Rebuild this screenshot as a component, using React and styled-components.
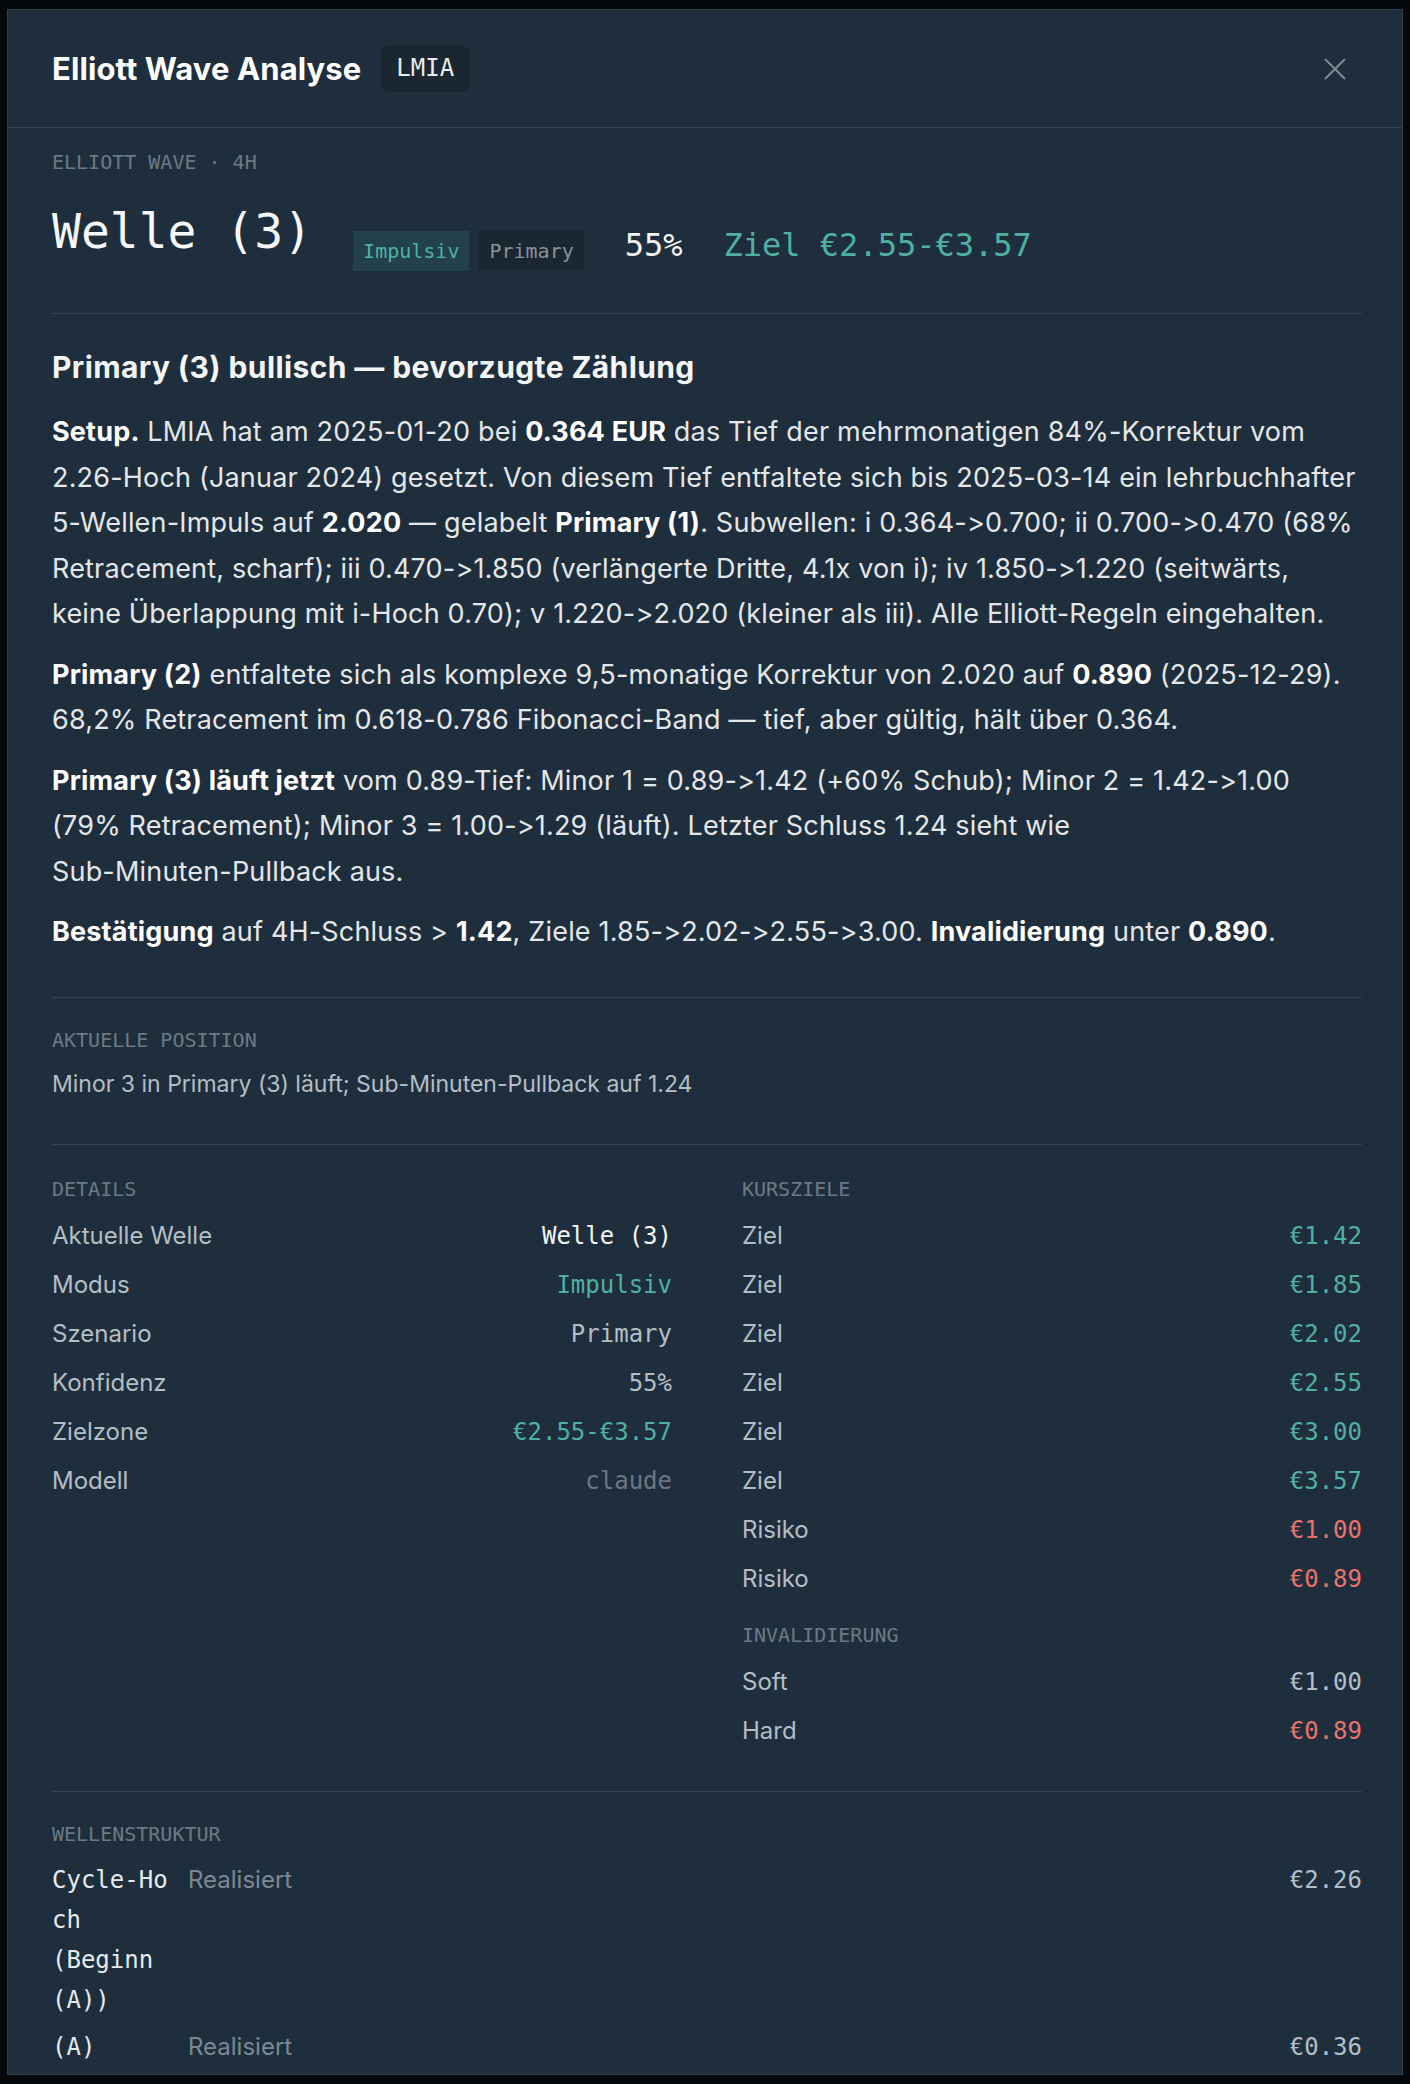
import styled, { createGlobalStyle } from 'styled-components'

const MONO = `"DejaVu Sans Mono", "Liberation Mono", monospace`

const GlobalStyle = createGlobalStyle`
  html, body {
    margin: 0;
    padding: 0;
    background: #05090c;
  }
  body {
    font-family: Inter, "Noto Sans", sans-serif;
    font-feature-settings: "calt" 0, "liga" 0;
    -webkit-font-smoothing: antialiased;
  }
  * { box-sizing: border-box; }
`

const tones = {
    white: '#f3f5f7',
    light: '#b4bec6',
    teal: '#4fb0a3',
    red: '#e8736b',
    muted: '#6b7883',
}

const Backdrop = styled.div`
    height: 2084px;
    padding: 9px 7px 0;
    overflow: hidden;
`

const Modal = styled.div`
    width: 1396px;
    height: 2066px;
    background: #1f2e3c;
    border: 1px solid #2e3e4b;
    overflow: hidden;
`

const Header = styled.header`
    display: flex;
    align-items: center;
    padding: 35px 47px 35px 44px;
    border-bottom: 1px solid #33434f;
`

const Title = styled.h1`
    margin: 0;
    font-size: 31px;
    line-height: 40px;
    font-weight: 700;
    letter-spacing: 0.1px;
    color: #ffffff;
`

const Ticker = styled.span`
    margin-left: 20px;
    padding: 9px 15px;
    font: 24px/29px ${MONO};
    color: #e9edf0;
    background: #1a2630;
    border-radius: 8px;
`

const CloseButton = styled.button`
    margin-left: auto;
    width: 40px;
    height: 40px;
    display: flex;
    align-items: center;
    justify-content: center;
    padding: 0;
    border: 0;
    background: none;
    color: #7e8a94;
    cursor: pointer;
`

const Body = styled.div`
    padding: 0 40px 0 44px;
`

const Section = styled.section`
    padding: ${p => p.$top ?? 28}px 0 ${p => p.$bottom ?? 42}px;
    border-bottom: ${p => (p.$last ? 'none' : '1px solid #33434f')};
`

const Label = styled.div`
    font: 20px/28px ${MONO};
    color: #6c7a85;
    text-transform: uppercase;
    margin-top: ${p => p.$gap ?? 0}px;
`

const HeroRow = styled.div`
    display: flex;
    align-items: flex-start;
    gap: 41px;
    margin-top: 27px;
`

const WaveTitle = styled.div`
    font: 48px/57.6px ${MONO};
    color: #f6f8f9;
`

const Meta = styled.div`
    display: flex;
    align-items: center;
    gap: 41px;
    margin-top: 16px;
`

const Tags = styled.div`
    display: flex;
    gap: 10px;
    padding-top: 12px;
`

const Tag = styled.span`
    padding: 8px 10px;
    font: 20px/24px ${MONO};
    color: ${p => (p.$teal ? '#4fb0a3' : '#87939c')};
    background: ${p => (p.$teal ? '#22414a' : '#1a2630')};
`

const BigValue = styled.span`
    font: 32px/38px ${MONO};
    color: ${p => tones[p.$tone] || tones.white};
`

const Heading = styled.h2`
    margin: 0 0 22px;
    font-size: 30px;
    line-height: 40px;
    font-weight: 700;
    letter-spacing: 0.4px;
    color: #f3f5f7;
`

const Para = styled.p`
    margin: 0 0 15px;
    font-size: 27px;
    line-height: 45.5px;
    letter-spacing: 0.18px;
    white-space: nowrap;
    color: #e3e7ea;

    &:last-child { margin-bottom: 0; }

    strong {
        font-weight: 700;
        color: #ffffff;
    }
`

const Note = styled.p`
    margin: 12px 0 0;
    font-size: 23px;
    line-height: 36px;
    color: #b4bec6;
`

const Columns = styled.div`
    display: grid;
    grid-template-columns: 1fr 1fr;
    column-gap: 70px;
`

const List = styled.div`
    margin-top: 9px;
`

const Row = styled.div`
    display: flex;
    justify-content: space-between;
    align-items: baseline;
    padding: 6px 0 7px;
    line-height: 36px;
`

const RowLabel = styled.span`
    font-size: 24px;
    color: #b4bec6;
`

const RowValue = styled.span`
    font: 24px/36px ${MONO};
    color: ${p => tones[p.$tone] || tones.light};
`

const WaveList = styled.div`
    margin-top: 12px;
`

const WaveRow = styled.div`
    display: grid;
    grid-template-columns: 118px 1fr auto;
    column-gap: 18px;
    line-height: 40px;

    & + & { margin-top: 7px; }
`

const WaveName = styled.span`
    font: 24px/40px ${MONO};
    color: #e6eaed;
    overflow-wrap: anywhere;
`

const WaveStatus = styled.span`
    font-size: 24px;
    color: #7c8993;
`

const WavePrice = styled.span`
    font: 24px/40px ${MONO};
    color: #b4bec6;
`

const details = [
    ['Aktuelle Welle', 'Welle (3)', 'white'],
    ['Modus', 'Impulsiv', 'teal'],
    ['Szenario', 'Primary', 'light'],
    ['Konfidenz', '55%', 'light'],
    ['Zielzone', '€2.55-€3.57', 'teal'],
    ['Modell', 'claude', 'muted'],
]

const targets = [
    ['Ziel', '€1.42', 'teal'],
    ['Ziel', '€1.85', 'teal'],
    ['Ziel', '€2.02', 'teal'],
    ['Ziel', '€2.55', 'teal'],
    ['Ziel', '€3.00', 'teal'],
    ['Ziel', '€3.57', 'teal'],
    ['Risiko', '€1.00', 'red'],
    ['Risiko', '€0.89', 'red'],
]

const invalidation = [
    ['Soft', '€1.00', 'light'],
    ['Hard', '€0.89', 'red'],
]

const waves = [
    ['Cycle\u2011Hoch (Beginn (A))', 'Realisiert', '€2.26'],
    ['(A)', 'Realisiert', '€0.36'],
]

function KeyValues({ rows }) {
    return (
        <List>
            {rows.map(([label, value, tone], i) => (
                <Row key={i}>
                    <RowLabel>{label}</RowLabel>
                    <RowValue $tone={tone}>{value}</RowValue>
                </Row>
            ))}
        </List>
    )
}

export default function App() {
    return (
        <Backdrop>
            <GlobalStyle />
            <Modal>
                <Header>
                    <Title>Elliott Wave Analyse</Title>
                    <Ticker>LMIA</Ticker>
                    <CloseButton aria-label="Schließen">
                        <svg width="22" height="22" viewBox="0 0 22 22" fill="none" stroke="currentColor" strokeWidth="2" strokeLinecap="round">
                            <path d="M1.5 1.5l19 19M20.5 1.5l-19 19" />
                        </svg>
                    </CloseButton>
                </Header>

                <Body>
                    <Section $top={20}>
                        <Label>Elliott Wave · 4H</Label>
                        <HeroRow>
                            <WaveTitle>Welle (3)</WaveTitle>
                            <Meta>
                                <Tags>
                                    <Tag $teal>Impulsiv</Tag>
                                    <Tag>Primary</Tag>
                                </Tags>
                                <BigValue>55%</BigValue>
                                <BigValue $tone="teal">Ziel €2.55-€3.57</BigValue>
                            </Meta>
                        </HeroRow>
                    </Section>

                    <Section $top={33}>
                        <Heading>Primary (3) bullisch — bevorzugte Zählung</Heading>
                        <Para>
                            <strong>Setup.</strong> LMIA hat am 2025-01-20 bei <strong>0.364 EUR</strong> das Tief der mehrmonatigen 84%-Korrektur vom<br />
                            2.26-Hoch (Januar 2024) gesetzt. Von diesem Tief entfaltete sich bis 2025-03-14 ein lehrbuchhafter<br />
                            5-Wellen-Impuls auf <strong>2.020</strong> — gelabelt <strong>Primary (1)</strong>. Subwellen: i 0.364-&gt;0.700; ii 0.700-&gt;0.470 (68%<br />
                            Retracement, scharf); iii 0.470-&gt;1.850 (verlängerte Dritte, 4.1x von i); iv 1.850-&gt;1.220 (seitwärts,<br />
                            keine Überlappung mit i-Hoch 0.70); v 1.220-&gt;2.020 (kleiner als iii). Alle Elliott-Regeln eingehalten.
                        </Para>
                        <Para>
                            <strong>Primary (2)</strong> entfaltete sich als komplexe 9,5-monatige Korrektur von 2.020 auf <strong>0.890</strong> (2025-12-29).<br />
                            68,2% Retracement im 0.618-0.786 Fibonacci-Band — tief, aber gültig, hält über 0.364.
                        </Para>
                        <Para>
                            <strong>Primary (3) läuft jetzt</strong> vom 0.89-Tief: Minor 1 = 0.89-&gt;1.42 (+60% Schub); Minor 2 = 1.42-&gt;1.00<br />
                            (79% Retracement); Minor 3 = 1.00-&gt;1.29 (läuft). Letzter Schluss 1.24 sieht wie<br />
                            Sub-Minuten-Pullback aus.
                        </Para>
                        <Para>
                            <strong>Bestätigung</strong> auf 4H-Schluss &gt; <strong>1.42</strong>, Ziele 1.85-&gt;2.02-&gt;2.55-&gt;3.00. <strong>Invalidierung</strong> unter <strong>0.890</strong>.
                        </Para>
                    </Section>

                    <Section>
                        <Label>Aktuelle Position</Label>
                        <Note>Minor 3 in Primary (3) läuft; Sub-Minuten-Pullback auf 1.24</Note>
                    </Section>

                    <Section $top={30} $bottom={35}>
                        <Columns>
                            <div>
                                <Label>Details</Label>
                                <KeyValues rows={details} />
                            </div>
                            <div>
                                <Label>Kursziele</Label>
                                <KeyValues rows={targets} />
                                <Label $gap={17}>Invalidierung</Label>
                                <KeyValues rows={invalidation} />
                            </div>
                        </Columns>
                    </Section>

                    <Section $last>
                        <Label>Wellenstruktur</Label>
                        <WaveList>
                            {waves.map(([name, status, price], i) => (
                                <WaveRow key={i}>
                                    <WaveName>{name}</WaveName>
                                    <WaveStatus>{status}</WaveStatus>
                                    <WavePrice>{price}</WavePrice>
                                </WaveRow>
                            ))}
                        </WaveList>
                    </Section>
                </Body>
            </Modal>
        </Backdrop>
    )
}
